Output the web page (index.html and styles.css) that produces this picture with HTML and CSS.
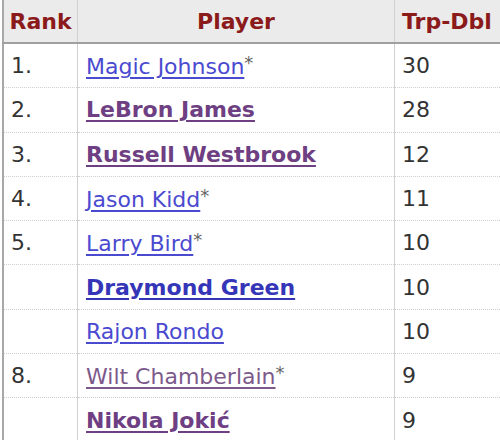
FILE: index.html
```html
<!DOCTYPE html>
<html>
<head>
<meta charset="utf-8">
<link rel="stylesheet" href="styles.css">
</head>
<body>
<table class="board">
  <thead>
    <tr><th class="c-rank">Rank</th><th class="c-player">Player</th><th class="c-val">Trp-Dbl</th></tr>
  </thead>
  <tbody>
    <tr><td>1.</td><td><a class="lk">Magic Johnson</a><span class="hof">*</span></td><td>30</td></tr>
    <tr><td>2.</td><td><a class="vs b">LeBron James</a></td><td>28</td></tr>
    <tr><td>3.</td><td><a class="vs b">Russell Westbrook</a></td><td>12</td></tr>
    <tr><td>4.</td><td><a class="lk">Jason Kidd</a><span class="hof">*</span></td><td>11</td></tr>
    <tr><td>5.</td><td><a class="lk">Larry Bird</a><span class="hof">*</span></td><td>10</td></tr>
    <tr><td></td><td><a class="lk b">Draymond Green</a></td><td>10</td></tr>
    <tr><td></td><td><a class="lk">Rajon Rondo</a></td><td>10</td></tr>
    <tr><td>8.</td><td><a class="vs">Wilt Chamberlain</a><span class="hof">*</span></td><td>9</td></tr>
    <tr><td></td><td><a class="vs b">Nikola Jokić</a></td><td>9</td></tr>
  </tbody>
</table>
</body>
</html>
```
FILE: styles.css
```css
html, body { margin: 0; padding: 0; background: #fff; }
body { font-family: "DejaVu Sans", Verdana, sans-serif; font-size: 22px; color: #333; overflow: hidden; }
.board { border-collapse: collapse; margin-left: 2px; border-left: 2px solid #a8a8a8; table-layout: fixed; width: 498px; }
.board th { background: #ebebeb; color: #8b1a1a; font-weight: bold; height: 42px; padding: 0; text-align: center; border-bottom: 2px solid #a0a0a0; border-right: 1px solid #d0d0d0; }
.c-rank { width: 73px; }
.c-player { width: 316px; }
.c-val { text-align: left !important; padding-left: 7px !important; }
.board td { height: 43.3px; padding: 0 0 0 7px; border-right: 1px solid #d0d0d0; border-top: 1px dotted #cfcfcf; vertical-align: middle; white-space: nowrap; }
.board th:last-child, .board td:last-child { border-right: none; }
.board tbody tr:first-child td { border-top: none; }
.board td:nth-child(2) { padding-left: 8px; }
.board td:nth-child(3) { padding-left: 7px; }
a { text-decoration: underline; text-underline-offset: 3px; text-decoration-thickness: 2px; }
.lk { color: #4a4ad0; }
.vs { color: #6e3f82; }
.vs:not(.b) { color: #7d5a8c; }
.b { font-weight: bold; }
.lk.b { color: #3535b8; }
.hof { color: #666; font-size: 18px; vertical-align: 5px; }
```
